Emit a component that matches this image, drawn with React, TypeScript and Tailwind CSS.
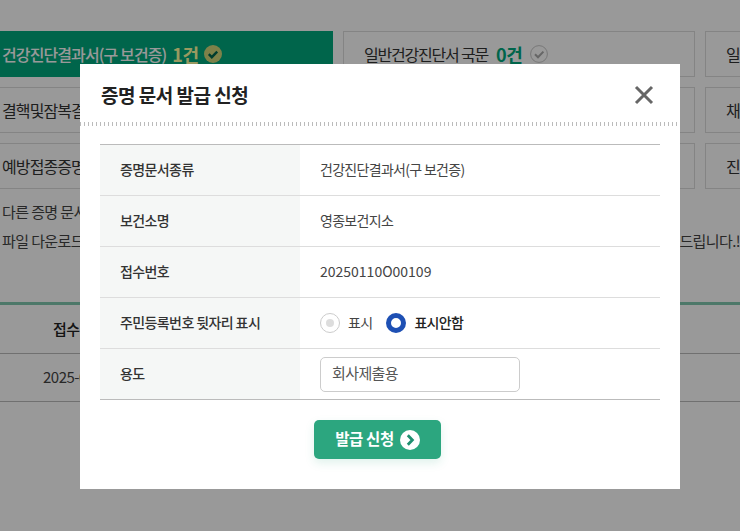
import React from "react";

const font = { fontFamily: '"Noto Sans CJK KR", "Noto Sans", sans-serif' };

function Check({ on }: { on: boolean }) {
  if (on)
    return (
      <svg width="18" height="18" viewBox="0 0 18 18" className="ml-[5px]">
        <circle cx="9" cy="9" r="9" fill="#d2d87a" />
        <path d="M4.8 9.2l3 3 5.4-5.6" fill="none" stroke="#00664e" strokeWidth="2.4" />
      </svg>
    );
  return (
    <svg width="18" height="18" viewBox="0 0 18 18" className="ml-[8px]">
      <circle cx="9" cy="9" r="8.4" fill="none" stroke="#c8c8c8" strokeWidth="1" />
      <path d="M5 9.2l3 3 5.4-5.6" fill="none" stroke="#aaa" strokeWidth="2" />
    </svg>
  );
}

function Card({ text, count, on, wide }: { text: string; count?: string; on?: boolean; wide?: boolean }) {
  return (
    <div
      className={
        "w-[352px] shrink-0 h-[46px] flex items-center border text-[16px] whitespace-nowrap " +
        (wide ? "tracking-[-1.2px] " : "tracking-[-0.9px] ") +
        (on ? "bg-[#00a87e] border-[#00a87e] text-white font-medium pl-[20px]" : "bg-white border-[#ddd] text-[#333] pl-[20px]")
      }
    >
      <span>{text}</span>
      {count && (
        <span
          className={
            "text-[18px] font-bold tracking-[-0.4px] " + (on ? "ml-[6px] text-[#ffffa0]" : "ml-[8px] text-[#00a87e]")
          }
        >
          {count}
        </span>
      )}
      {count && <Check on={!!on} />}
    </div>
  );
}

function Row({ label, children, last, flat }: { label: string; children: React.ReactNode; last?: boolean; flat?: boolean }) {
  return (
    <div className={"flex h-[51px] border-b " + (last ? "border-[#bbb]" : "border-[#ddd]")}>
      <div className="w-[200px] shrink-0 bg-[#f5f7f6] flex items-center pl-[20px] pb-[1px] text-[14px] font-medium tracking-[-0.6px] text-[#333]">
        {label}
      </div>
      <div
        className={
          "flex-1 flex items-center pl-[20px] text-[14px] text-[#444] " +
          (last ? "" : "pb-[1px] ") +
          (flat ? "tracking-[0px]" : "tracking-[-0.7px]")
        }
      >
        {children}
      </div>
    </div>
  );
}

export default function App() {
  return (
    <div style={font} className="relative w-[740px] h-[531px] overflow-hidden bg-white">
      <div className="pt-[31px] -ml-[19px] flex flex-col gap-[10px] w-[1100px]">
        <div className="flex gap-[10px]">
          <Card text="건강진단결과서(구 보건증)" count="1건" on />
          <Card text="일반건강진단서 국문" count="0건" wide />
          <Card text="일반건강진단서" />
        </div>
        <div className="flex gap-[10px]">
          <Card text="결핵및잠복결핵검사서" />
          <Card text="" />
          <Card text="채용건강검진" />
        </div>
        <div className="flex gap-[10px]">
          <Card text="예방접종증명서" />
          <Card text="" />
          <Card text="진단서" />
        </div>
      </div>
      <div className="mt-[8px] pl-[2px] text-[15px] leading-[29px] tracking-[-0.6px] text-[#444] whitespace-nowrap">
        <p>다른 증명 문서 안내</p>
        <p className="flex justify-between">
          <span>파일 다운로드</span>
          <span>드립니다.!</span>
        </p>
      </div>
      <div className="mt-[47px] border-t-[3px] border-[#80c8b0]">
        <div className="h-[49px] border-b border-[#bbb] flex items-center pl-[53px] text-[15px] font-medium tracking-[-0.5px] text-[#222]">
          접수번호
        </div>
        <div className="h-[48px] border-b border-[#bbb] flex items-center pl-[43px] text-[15px] tracking-[-0.5px] text-[#444]">
          2025-01-10
        </div>
      </div>

      <div className="absolute inset-0 bg-black/40 flex justify-start items-start pt-[64px] pl-[80px]">
        <div className="w-[600px] h-[425px] bg-white">
          <div className="h-[58px] flex items-start justify-between pl-[21px] pr-[26px] pt-[17px]">
            <h2 className="text-[19px] font-bold tracking-[-0.5px] text-[#222]">증명 문서 발급 신청</h2>
            <svg width="20" height="20" viewBox="0 0 20 20" className="mt-[4px]">
              <path d="M2 2L18 18M18 2L2 18" stroke="#666" strokeWidth="3" />
            </svg>
          </div>
          <div className="h-[4px] mr-[3px] bg-[repeating-linear-gradient(90deg,#bbb_0,#bbb_1px,transparent_1px,transparent_4px)]" />
          <div className="mx-[20px] mt-[18px] border-t border-[#bbb]">
            <Row label="증명문서종류">건강진단결과서(구 보건증)</Row>
            <Row label="보건소명">영종보건지소</Row>
            <Row label="접수번호" flat>20250110O00109</Row>
            <Row label="주민등록번호 뒷자리 표시">
              <div className="flex items-center">
                <span className="w-[20px] h-[20px] rounded-full border border-[#ccc] flex items-center justify-center">
                  <span className="w-[8px] h-[8px] rounded-full bg-[#ddd]" />
                </span>
                <span className="ml-[8px]">표시</span>
                <span className="ml-[14px] w-[20px] h-[20px] rounded-full border-[5px] border-[#1e50b4] bg-white" />
                <span className="ml-[8px] font-medium text-[#222]">표시안함</span>
              </div>
            </Row>
            <Row label="용도" last>
              <div className="w-[200px] h-[35px] border border-[#ccc] rounded-[5px] flex items-center pl-[11px] pb-[1px] text-[15px] tracking-[-0.6px] text-[#555]">
                회사제출용
              </div>
            </Row>
          </div>
          <div className="flex justify-start pl-[234px] mt-[20px]">
            <button className="w-[127px] h-[39px] rounded-[5px] bg-[#2ca67f] shadow-[0_4px_10px_rgba(44,166,127,0.15)] flex items-center justify-center text-white text-[15.5px] font-bold tracking-[-0.4px]">
              <span className="pb-[1px]">발급 신청</span>
              <svg width="20" height="20" viewBox="0 0 20 20" className="ml-[6px]">
                <circle cx="10" cy="10" r="10" fill="#fff" />
                <path d="M7.8 5.2L12.4 10L7.8 14.8" fill="none" stroke="#1f8f70" strokeWidth="2.8" />
              </svg>
            </button>
          </div>
        </div>
      </div>
    </div>
  );
}
